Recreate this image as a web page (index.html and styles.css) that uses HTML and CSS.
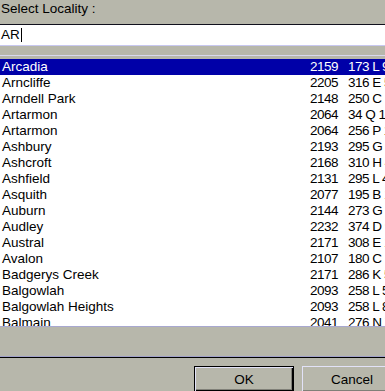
FILE: index.html
```html
<!DOCTYPE html>
<html lang="en">
<head>
  <meta charset="UTF-8">
  <title>Select Locality</title>
  <link rel="stylesheet" href="styles.css">
</head>
<body>

  <!-- Search prompt -->
  <div class="prompt">Select Locality :</div>
  <div class="search"><span class="typed">AR</span><span class="caret"></span></div>

  <!-- Locality list -->
  <div class="list-frame">
    <ul class="list">
      <li class="row selected"><span class="name">Arcadia</span><span class="pc">2159</span><span class="ref">173 L 9</span></li>
      <li class="row"><span class="name">Arncliffe</span><span class="pc">2205</span><span class="ref">316 E 5</span></li>
      <li class="row"><span class="name">Arndell Park</span><span class="pc">2148</span><span class="ref">250 C 1</span></li>
      <li class="row"><span class="name">Artarmon</span><span class="pc">2064</span><span class="ref">34 Q 1</span></li>
      <li class="row"><span class="name">Artarmon</span><span class="pc">2064</span><span class="ref">256 P 1</span></li>
      <li class="row"><span class="name">Ashbury</span><span class="pc">2193</span><span class="ref">295 G 7</span></li>
      <li class="row"><span class="name">Ashcroft</span><span class="pc">2168</span><span class="ref">310 H 4</span></li>
      <li class="row"><span class="name">Ashfield</span><span class="pc">2131</span><span class="ref">295 L 4</span></li>
      <li class="row"><span class="name">Asquith</span><span class="pc">2077</span><span class="ref">195 B 1</span></li>
      <li class="row"><span class="name">Auburn</span><span class="pc">2144</span><span class="ref">273 G 9</span></li>
      <li class="row"><span class="name">Audley</span><span class="pc">2232</span><span class="ref">374 D 9</span></li>
      <li class="row"><span class="name">Austral</span><span class="pc">2171</span><span class="ref">308 E 1</span></li>
      <li class="row"><span class="name">Avalon</span><span class="pc">2107</span><span class="ref">180 C 1</span></li>
      <li class="row"><span class="name">Badgerys Creek</span><span class="pc">2171</span><span class="ref">286 K 5</span></li>
      <li class="row"><span class="name">Balgowlah</span><span class="pc">2093</span><span class="ref">258 L 5</span></li>
      <li class="row"><span class="name">Balgowlah Heights</span><span class="pc">2093</span><span class="ref">258 L 8</span></li>
      <li class="row"><span class="name">Balmain</span><span class="pc">2041</span><span class="ref">276 N 7</span></li>
    </ul>
  </div>

  <!-- Dialog buttons -->
  <div class="footer">
    <button class="btn default">OK</button>
    <button class="btn">Cancel</button>
  </div>

</body>
</html>
```

FILE: styles.css
```css
* {
  box-sizing: border-box;
  margin: 0;
  padding: 0;
}

html {
  background: #b7b7ab;
}

body {
  width: 385px;
  height: 391px;
  overflow: hidden;
  font-family: "Liberation Sans", Arial, sans-serif;
  font-size: 13.5px;
  color: #000;
  background: #b7b7ab;
}

.prompt {
  height: 24px;
  padding: 1px 0 0 1px;
  line-height: 16px;
}

/* Search box */
.search {
  display: flex;
  align-items: center;
  height: 22px;
  padding-left: 1px;
  line-height: 20px;
  background: #fff;
  border-top: 1px solid #10101c;
  border-bottom: 1px solid #c8c8f0;
}

.caret {
  width: 1px;
  height: 14px;
  margin-left: 1px;
  background: #000;
}

/* List */
.list-frame {
  margin-top: 9px;
  padding-top: 3px;
  border-top: 1px solid #d8d8f0;
}

.list {
  list-style: none;
  height: 268px;
  overflow: hidden;
  background: #fff;
  border-bottom: 1px solid #a8a8d0;
}

.row {
  display: grid;
  grid-template-columns: 308px 38px max-content;
  height: 16px;
  padding-left: 2px;
  line-height: 16px;
  white-space: nowrap;
}

.row.selected {
  background: #0000a8;
  color: #fff;
}

.pc, .ref {
  letter-spacing: -0.5px;
}

/* Buttons */
.footer {
  display: flex;
  gap: 8px;
  margin-top: 29px;
  padding: 9px 0 0 194px;
  border-top: 1px solid #a0a0c8;
  box-shadow: inset 0 1px 0 #000;
}

.btn {
  flex: none;
  width: 100px;
  height: 26px;
  font: inherit;
  color: #000;
  background: #b7b7ab;
  border: 1px solid;
  border-color: #e2e2f8 #000 #000 #e2e2f8;
  box-shadow: inset -1px -1px 0 #808078;
}

.btn.default {
  border-color: #000;
  box-shadow: inset 1px 1px 0 #e2e2f8, inset -1px -1px 0 #000, inset -2px -2px 0 #808078;
}
```
